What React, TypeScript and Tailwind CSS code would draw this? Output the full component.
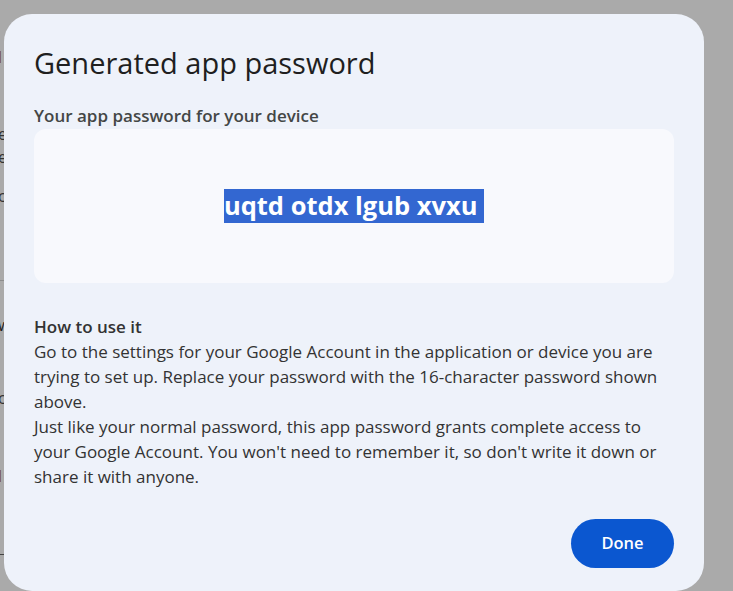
import React from 'react';

// glimpses of the page under the scrim, left of the dialog
const bgRows = [
    { gap: 'h-[47px]', text: 'l', color: 'text-[#7a4a14]' },
    { gap: 'h-[57px]', text: 'e', color: 'text-[#333]' },
    { gap: 'h-[3px]', text: 'e', color: 'text-[#333]' },
    { gap: 'h-[19px]', text: 'c', color: 'text-[#333]' },
];

const App = () => {
    const font = { fontFamily: '"Open Sans", Roboto, Arial, sans-serif' };

    return (
        <div className="relative h-[591px] w-[733px] overflow-hidden bg-[#aaaaaa]" style={font}>
            <div className="-ml-[2px] flex flex-col text-[16px] leading-none">
                {bgRows.map((row, i) => (
                    <React.Fragment key={i}>
                        <div className={row.gap}></div>
                        <div className={`flex h-[20px] items-center ${row.color}`}>{row.text}</div>
                    </React.Fragment>
                ))}
                <div className="h-[74px]"></div>
                <div className="h-px w-[20px] bg-[#8c8c8c]"></div>
                <div className="h-[34px]"></div>
                <div className="flex h-[20px] items-center text-[#222]">w</div>
                <div className="h-[53px]"></div>
                <div className="flex h-[20px] items-center text-[#333]">c</div>
                <div className="h-[58px]"></div>
                <div className="flex h-[20px] items-center text-[#7a4a14]">l</div>
                <div className="h-[68px]"></div>
                <div className="h-px w-[20px] bg-[#444]"></div>
            </div>

            {/* dialog */}
            <div className="absolute left-[4px] top-[14px] flex h-[577px] w-[700px] flex-col rounded-[28px] bg-[#eef2fa] px-[30px] pt-[31px] pb-[23px]">
                <h1 className="text-[29px] leading-[36px] font-normal text-[#1f1f1f]">Generated app password</h1>
                <h2 className="mt-[23px] text-[17px] leading-[24px] font-semibold text-[#444746]">Your app password for your device</h2>
                <div className="mt-px flex h-[154px] items-center justify-center rounded-[12px] bg-[#f8f9fd]">
                    <span className="inline-block h-[34px] bg-[#3367d1] text-[25.5px] leading-[33px] font-bold text-white">uqtd otdx lgub xvxu&nbsp;</span>
                </div>
                <div className="mt-[31px] text-[17px] leading-[25px] text-[#333]">
                    <div className="font-semibold">How to use it</div>
                    <p>Go to the settings for your Google Account in the application or device you are trying to set up. Replace your password with the 16-character password shown above.</p>
                    <p>Just like your normal password, this app password grants complete access to your Google Account. You won't need to remember it, so don't write it down or share it with anyone.</p>
                </div>
                <div className="mt-auto flex justify-end">
                    <button className="h-[49px] w-[103px] rounded-full bg-[#0b57d0] text-[16.5px] font-semibold text-white">Done</button>
                </div>
            </div>
        </div>
    );
};

export default App;
